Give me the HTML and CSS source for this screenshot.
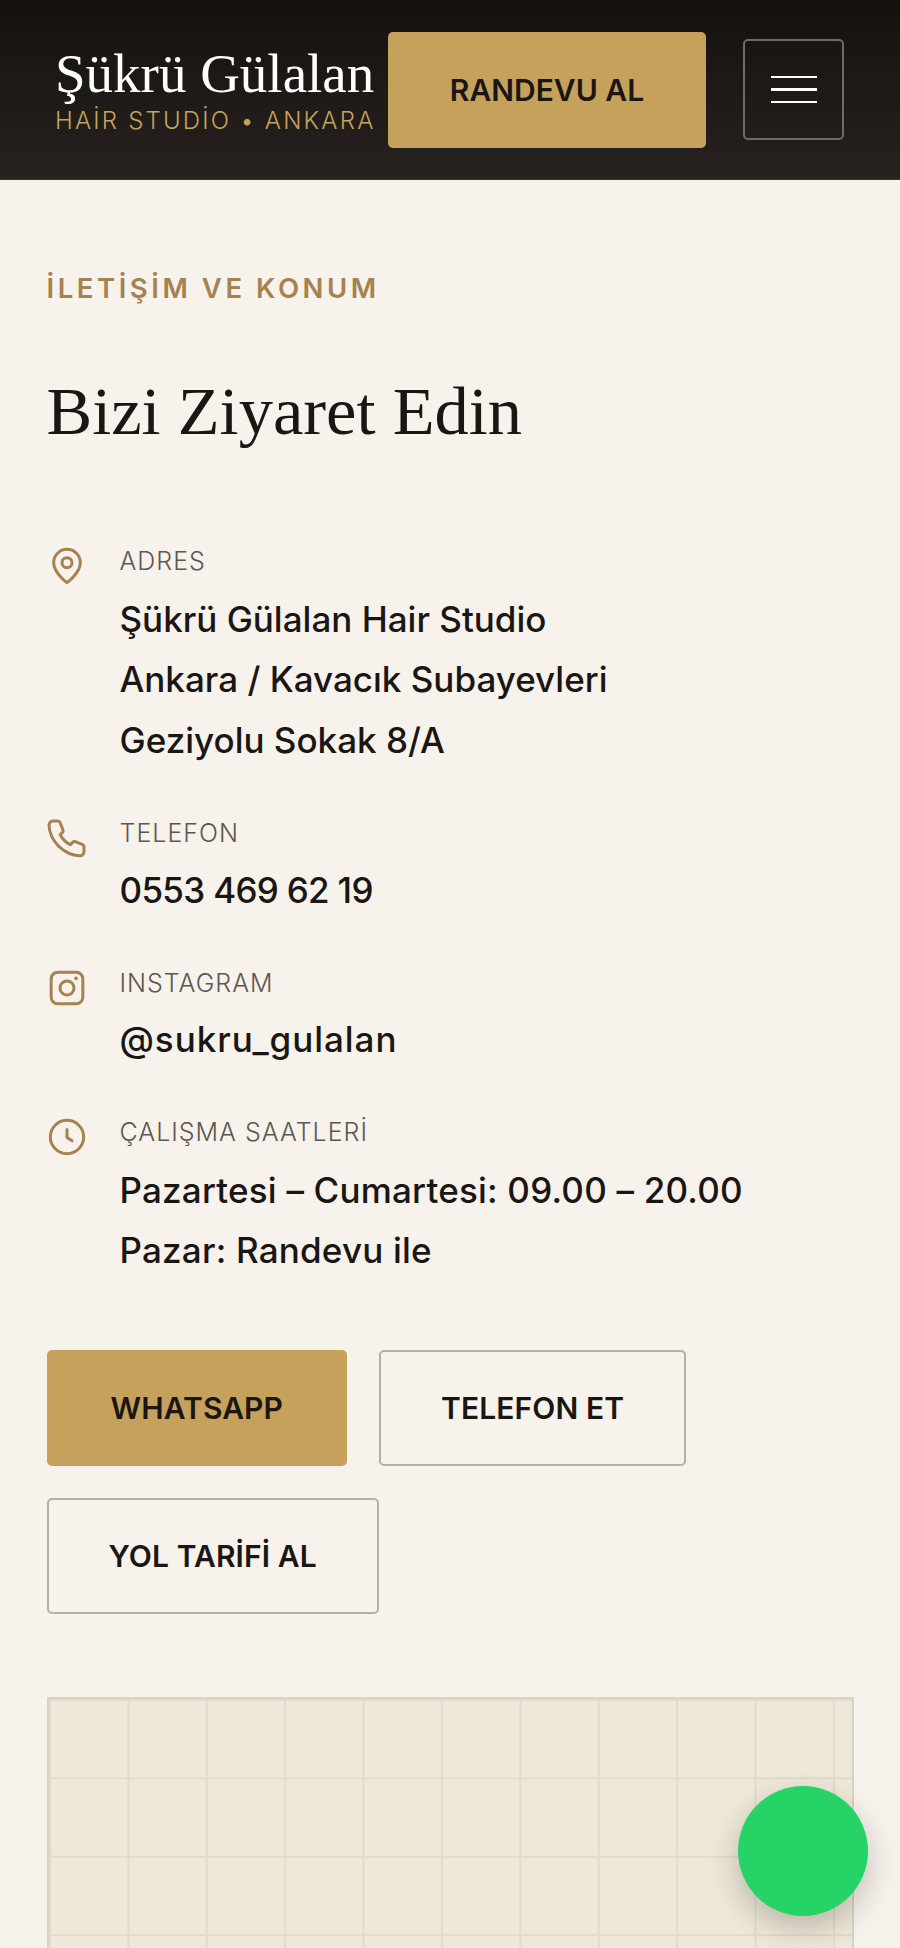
FILE: index.html
```html
<!DOCTYPE html>
<html lang="tr">
<head>
  <meta charset="UTF-8" />
  <meta name="viewport" content="width=device-width, initial-scale=1.0" />
  <title>İletişim - Şükrü Gülalan Hair Studio</title>
  <link rel="stylesheet" href="styles.css">
</head>
<body>
  <header class="site-header">
    <a href="#" class="logo">
      <span class="logo-name">Şükrü Gülalan</span>
      <span class="logo-sub">HAİR STUDİO • ANKARA</span>
    </a>
    <a href="#" class="btn btn-gold header-cta">RANDEVU AL</a>
    <button class="menu-btn" aria-label="Menü">
      <span></span><span></span><span></span>
    </button>
  </header>

  <main class="contact">
    <p class="eyebrow">İLETİŞİM VE KONUM</p>
    <h2 class="title">Bizi Ziyaret Edin</h2>

    <div class="info-list">
      <div class="info-row">
        <svg class="info-icon" viewBox="0 0 24 24">
          <path d="M20 10c0 6-8 12-8 12s-8-6-8-12a8 8 0 0 1 16 0Z" />
          <circle cx="12" cy="10" r="3" />
        </svg>
        <div>
          <div class="info-label">ADRES</div>
          <div class="info-value">Şükrü Gülalan Hair Studio<br>Ankara / Kavacık Subayevleri<br>Geziyolu Sokak 8/A</div>
        </div>
      </div>
      <div class="info-row">
        <svg class="info-icon" viewBox="0 0 24 24">
          <path d="M3.5 1.8h3a1.5 1.5 0 0 1 1.4 1l1.7 4.4a1.5 1.5 0 0 1-.4 1.6L7.9 10c1.4 2.6 3.4 4.6 6.1 6l1.4-1.4a1.5 1.5 0 0 1 1.6-.4l4.2 1.6a1.5 1.5 0 0 1 1 1.4v3a2.4 2.4 0 0 1-2.5 2.4C10 22.2 1.6 13.8 1.2 4.2a2.4 2.4 0 0 1 2.3-2.4Z" />
        </svg>
        <div>
          <div class="info-label">TELEFON</div>
          <div class="info-value value-phone">0553 469 62 19</div>
        </div>
      </div>
      <div class="info-row">
        <svg class="info-icon" viewBox="0 0 24 24">
          <rect x="2.5" y="2.5" width="19" height="19" rx="4" />
          <circle cx="12" cy="12" r="4.2" />
          <circle class="icon-dot" cx="17.4" cy="6.2" r="1.1" />
        </svg>
        <div>
          <div class="info-label">INSTAGRAM</div>
          <div class="info-value value-insta">@sukru_gulalan</div>
        </div>
      </div>
      <div class="info-row">
        <svg class="info-icon" viewBox="0 0 24 24">
          <circle cx="12" cy="12" r="10" />
          <path d="M12 7.5v4.8l3 2" />
        </svg>
        <div>
          <div class="info-label">ÇALIŞMA SAATLERİ</div>
          <div class="info-value value-hours">Pazartesi – Cumartesi: 09.00 – 20.00<br>Pazar: Randevu ile</div>
        </div>
      </div>
    </div>

    <div class="actions">
      <a href="#" class="btn btn-gold">WHATSAPP</a>
      <a href="#" class="btn btn-outline">TELEFON ET</a>
      <a href="#" class="btn btn-outline">YOL TARİFİ AL</a>
    </div>

    <div class="map"></div>
  </main>

  <a href="#" class="wa-float" aria-label="WhatsApp"></a>
</body>
</html>
```
FILE: styles.css
```css
html, body {
  height: 1948px;
  overflow: hidden;
}
body {
  margin: 0;
  font-family: 'Inter', sans-serif;
  background: #f7f2ec;
  color: #1a1613;
}
.site-header {
  height: 180px;
  box-sizing: border-box;
  padding: 32px 55px;
  display: flex;
  align-items: center;
  background: linear-gradient(180deg, #14110f, #27221e);
  border-bottom: 1px solid #3a3531;
}
.logo {
  display: flex;
  flex-direction: column;
  gap: 3px;
  padding-top: 4px;
  text-decoration: none;
  width: 333px;
  flex-shrink: 0;
}
.logo-name {
  font-family: 'Liberation Serif', serif;
  font-size: 55px;
  line-height: 56px;
  color: #fff;
}
.logo-sub {
  font-size: 24px;
  line-height: 32px;
  letter-spacing: 2.2px;
  font-weight: 300;
  color: #c6a25d;
  white-space: nowrap;
}
.btn {
  display: flex;
  align-items: center;
  justify-content: center;
  box-sizing: border-box;
  height: 116px;
  border-radius: 5px;
  font-size: 30px;
  font-weight: 600;
  letter-spacing: 0.1px;
  color: #1a1613;
  text-decoration: none;
  white-space: nowrap;
}
.btn-gold {
  background: #c5a15c;
}
.btn-outline {
  border: 2.5px solid #b5b0aa;
}
.header-cta {
  width: 318px;
  flex-shrink: 0;
  letter-spacing: 0;
}
.menu-btn {
  margin-left: 37px;
  width: 101px;
  height: 101px;
  flex-shrink: 0;
  background: transparent;
  border: 2.5px solid #6f6b67;
  border-radius: 5px;
  display: flex;
  flex-direction: column;
  align-items: center;
  justify-content: center;
  gap: 10px;
  padding: 0;
}
.menu-btn span {
  width: 46px;
  height: 2.5px;
  background: #fff;
}
.contact {
  padding: 0 46.5px;
}
.eyebrow {
  margin: 0;
  padding-top: 90px;
  font-size: 27.5px;
  line-height: 36px;
  font-weight: 600;
  letter-spacing: 3.55px;
  color: #a5824f;
}
.title {
  margin: 61px 0 0;
  font-family: 'Liberation Serif', serif;
  font-size: 68.5px;
  line-height: 88px;
  font-weight: 400;
  color: #1a1613;
}
.info-list {
  margin-top: 89px;
  display: flex;
  flex-direction: column;
  gap: 45.5px;
}
.info-row {
  display: flex;
  gap: 33px;
}
.info-icon {
  width: 40px;
  height: 40px;
  flex-shrink: 0;
  margin-top: 2px;
  fill: none;
  stroke: #a5824f;
  stroke-width: 1.8;
  stroke-linecap: round;
  stroke-linejoin: round;
}
.icon-dot {
  fill: #a5824f;
  stroke: none;
}
.info-label {
  font-size: 25px;
  line-height: 34px;
  font-weight: 300;
  letter-spacing: 1px;
  color: #5d5750;
}
.info-value {
  margin-top: 10.5px;
  font-size: 35px;
  line-height: 60.5px;
  font-weight: 550;
}
.value-phone {
  letter-spacing: -0.7px;
}
.value-insta {
  margin-top: 9px;
  letter-spacing: 0.95px;
}
.value-hours {
  letter-spacing: 0.2px;
}
.actions {
  margin-top: 69px;
  display: flex;
  flex-wrap: wrap;
  gap: 32px;
}
.actions .btn-gold {
  padding: 0 64px;
}
.actions .btn-outline {
  padding: 0 60px;
}
.map {
  margin-top: 83px;
  height: 500px;
  border: 2px solid #d8d2c4;
  background-color: #eee8d8;
  background-image:
    linear-gradient(#e1dbcd 2px, transparent 2px),
    linear-gradient(90deg, #e1dbcd 1.5px, transparent 1.5px);
  background-size: 78.4px 78.4px;
}
.wa-float {
  position: fixed;
  right: 32px;
  bottom: 32px;
  width: 130px;
  height: 130px;
  border-radius: 50%;
  background: #25d366;
  box-shadow: 0 12px 32px rgba(0, 0, 0, 0.22);
}
```
